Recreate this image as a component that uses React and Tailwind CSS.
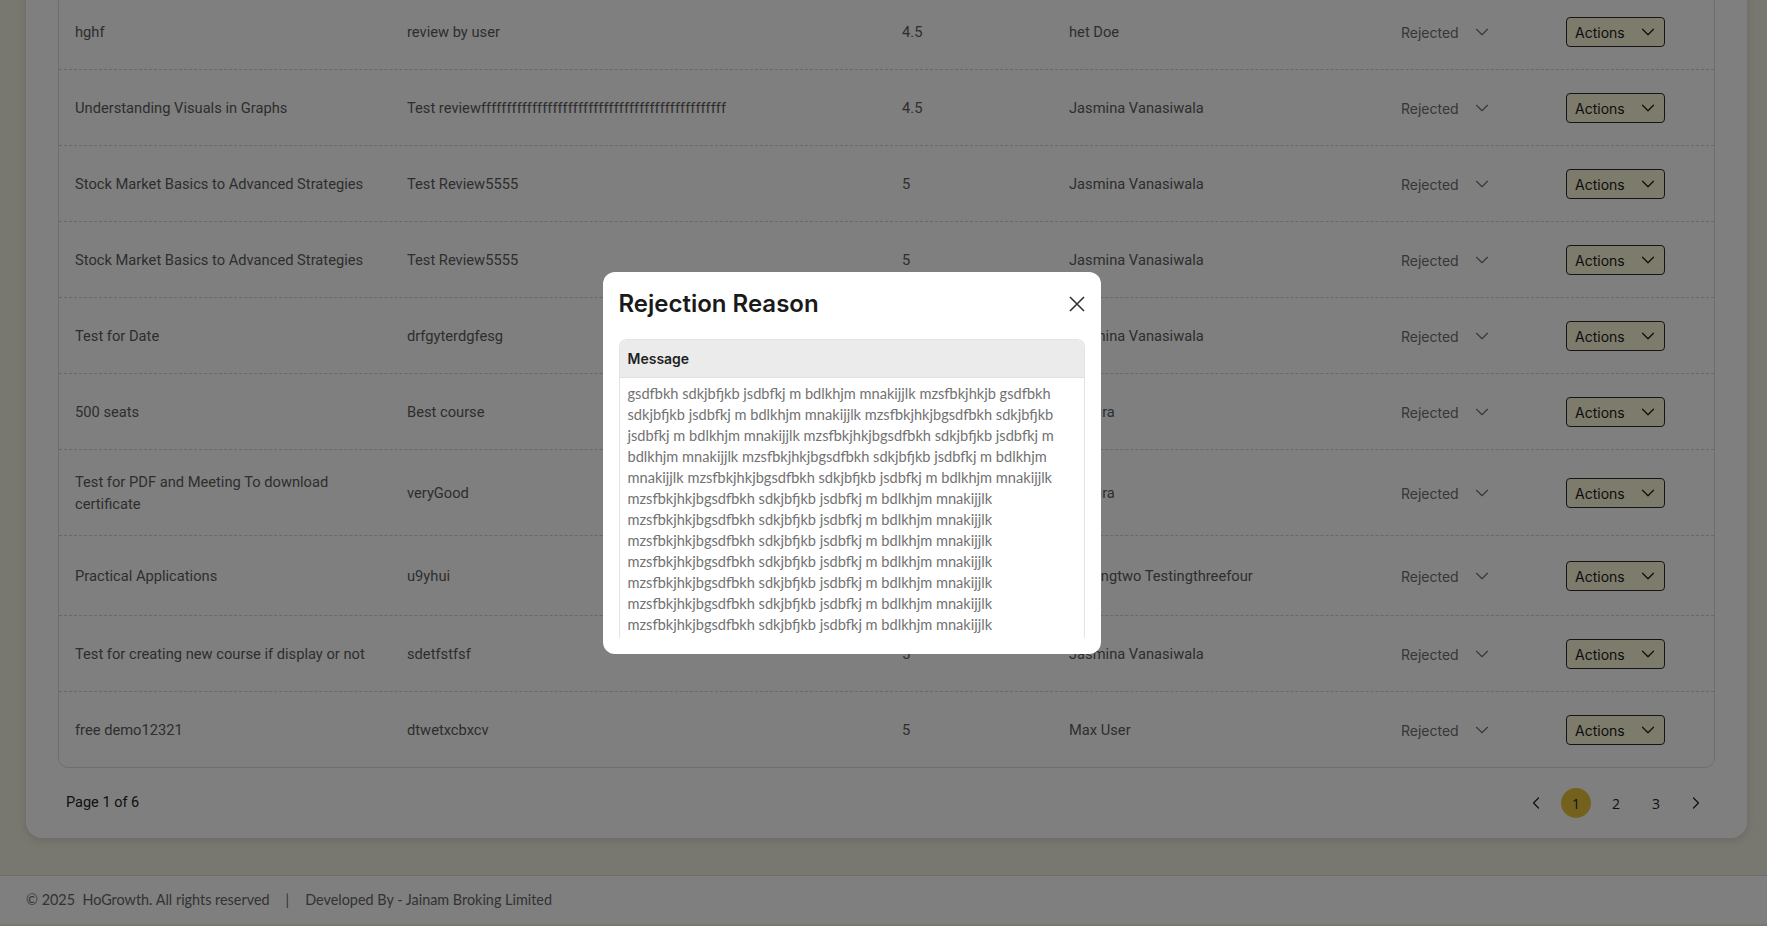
import React from "react";
import { ChevronDown, ChevronLeft, ChevronRight } from "lucide-react";

const rows = [
  { course: "hghf", review: "review by user", rating: "4.5", user: "het Doe" },
  {
    course: "Understanding Visuals in Graphs",
    review: "Test review" + "f".repeat(48),
    rating: "4.5",
    user: "Jasmina Vanasiwala",
  },
  { course: "Stock Market Basics to Advanced Strategies", review: "Test Review5555", rating: "5", user: "Jasmina Vanasiwala" },
  { course: "Stock Market Basics to Advanced Strategies", review: "Test Review5555", rating: "5", user: "Jasmina Vanasiwala" },
  { course: "Test for Date", review: "drfgyterdgfesg", rating: "5", user: "Jasmina Vanasiwala" },
  { course: "500 seats", review: "Best course", rating: "5", user: "Samira" },
  { course: "Test for PDF and Meeting To download certificate", review: "veryGood", rating: "5", user: "Samira" },
  { course: "Practical Applications", review: "u9yhui", rating: "4", user: "Testingtwo Testingthreefour", roomy: true },
  { course: "Test for creating new course if display or not", review: "sdetfstfsf", rating: "5", user: "Jasmina Vanasiwala" },
  { course: "free demo12321", review: "dtwetxcbxcv", rating: "5", user: "Max User" },
];

const repeatLine = "mzsfbkjhkjbgsdfbkh sdkjbfjkb jsdbfkj m bdlkhjm mnakijjlk";

const messageLines = [
  "gsdfbkh sdkjbfjkb jsdbfkj m bdlkhjm mnakijjlk mzsfbkjhkjb gsdfbkh",
  "sdkjbfjkb jsdbfkj m bdlkhjm mnakijjlk mzsfbkjhkjbgsdfbkh sdkjbfjkb",
  "jsdbfkj m bdlkhjm mnakijjlk mzsfbkjhkjbgsdfbkh sdkjbfjkb jsdbfkj m",
  "bdlkhjm mnakijjlk mzsfbkjhkjbgsdfbkh sdkjbfjkb jsdbfkj m bdlkhjm",
  "mnakijjlk mzsfbkjhkjbgsdfbkh sdkjbfjkb jsdbfkj m bdlkhjm mnakijjlk",
  repeatLine,
  repeatLine,
  repeatLine,
  repeatLine,
  repeatLine,
  repeatLine,
  repeatLine,
  repeatLine,
  repeatLine,
];

const cols = "grid grid-cols-[332px_495px_167px_332px_165px_1fr] items-center";

const App = () => {
  return (
    <div className="relative h-screen overflow-hidden bg-[#f0eee0] font-['Roboto',sans-serif]">
      <div className="ml-[26px] mr-[20px] -mt-[31px] rounded-[16px] bg-white px-8 pt-6 shadow-[0_2px_8px_rgba(0,0,0,0.12)]">
        <div className="rounded-[10px] border border-[#dcdcdc]">
          {rows.map((row, i) => (
            <div
              key={i}
              className={`${cols} ${row.roomy ? "pt-[23px] pb-[22px]" : "pt-[21px] pb-[20px]"} text-[14.7px] text-[#5c5c5c] ${
                i < rows.length - 1 ? "border-b border-dashed border-[#d0d0d0]" : ""
              }`}
            >
              <div className="px-4 leading-[22px]">{row.course}</div>
              <div className="px-4 whitespace-nowrap">{row.review}</div>
              <div className="px-4">{row.rating}</div>
              <div className="px-4">{row.user}</div>
              <div className="flex h-[34px] items-center gap-3 px-4 font-['Inter',sans-serif] text-[14px] text-[#6e6e6e]">
                <span>Rejected</span>
                <ChevronDown size={22} strokeWidth={1.2} />
              </div>
              <div className="px-4">
                <button className="flex h-[30px] w-[99px] items-center justify-between rounded-[4px] border border-[#2a2a2a] bg-[#fbf6d6] pl-[8px] pr-[5px] font-['Inter',sans-serif] text-[14px] text-[#1a1a1a]">
                  <span>Actions</span>
                  <ChevronDown size={22} strokeWidth={1.3} />
                </button>
              </div>
            </div>
          ))}
        </div>
        <div className="flex items-center justify-between py-5 pl-[8px] pr-[4px]">
          <span className="text-[14.5px] text-[#222]">Page 1 of 6</span>
          <div className="flex items-center gap-[10px] font-['Open_Sans',sans-serif] text-[14px] text-[#222]">
            <button className="flex h-[30px] w-[30px] items-center justify-center">
              <ChevronLeft size={20} strokeWidth={1.5} />
            </button>
            <button className="flex h-[30px] w-[30px] items-center justify-center rounded-full bg-[#e9c23a]">1</button>
            <button className="flex h-[30px] w-[30px] items-center justify-center">2</button>
            <button className="flex h-[30px] w-[30px] items-center justify-center">3</button>
            <button className="flex h-[30px] w-[30px] items-center justify-center">
              <ChevronRight size={20} strokeWidth={1.5} />
            </button>
          </div>
        </div>
      </div>

      <footer className="mt-[37px] border-t border-[#d8d8d8] bg-white px-[26px] py-[14px] font-['Lato',sans-serif] text-[14.4px] leading-5 text-[#666]">
        <span>© 2025&nbsp; HoGrowth. All rights reserved</span>
        <span className="mx-[16px]">|</span>
        <span>Developed By - Jainam Broking Limited</span>
      </footer>

      <div className="fixed inset-0 flex items-center justify-center bg-black/50 pr-[64px]">
        <div className="w-[498px] rounded-[12px] bg-white p-4">
          <div className="mb-[19px] flex items-center justify-between">
            <h2 className="font-['Inter',sans-serif] text-[24px] font-semibold leading-8 text-[#1a1a1a]">
              Rejection Reason
            </h2>
            <button className="text-[#333]">
              <svg width="16" height="16" viewBox="0 0 16 16" fill="none" stroke="currentColor" strokeWidth="1.6">
                <path d="M1 1L15 15M15 1L1 15" />
              </svg>
            </button>
          </div>
          <div className="overflow-hidden rounded-t-[8px] border border-b-0 border-[#e3e3e3]">
            <div className="flex h-[38px] items-center border-b border-[#e0e0e0] bg-[#ebebeb] px-2 font-['Inter',sans-serif] text-[14px] font-semibold text-[#1f1f1f]">
              Message
            </div>
            <div className="h-[260px] overflow-hidden px-2 pt-[5px] font-['Lato',sans-serif] text-[14.6px] leading-[21px] text-[#727272]">
              {messageLines.map((line, i) => (
                <div key={i} className="whitespace-nowrap">
                  {line}
                </div>
              ))}
            </div>
          </div>
        </div>
      </div>
    </div>
  );
};

export default App;
